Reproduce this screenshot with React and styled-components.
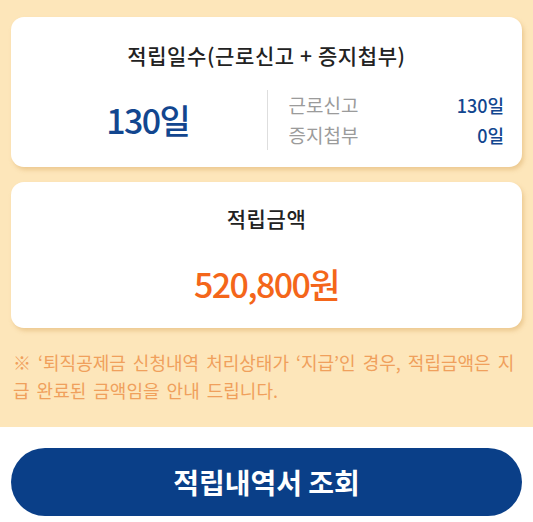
import React from "react";
import styled, { createGlobalStyle } from "styled-components";

const GlobalStyle = createGlobalStyle`
  html, body {
    margin: 0;
    padding: 0;
    background: #ffffff;
  }
  body {
    font-family: "Noto Sans CJK KR", "Noto Sans", sans-serif;
    -webkit-font-smoothing: antialiased;
  }
`;

const Page = styled.div`
  width: 533px;
  display: flex;
  flex-direction: column;
`;

const Summary = styled.section`
  background: #fde6ba;
  padding: 17px 11px 23px;
  display: flex;
  flex-direction: column;
  gap: 15px;
`;

const Card = styled.div`
  background: #ffffff;
  border-radius: 13px;
  box-shadow: 2px 3px 4px rgba(206, 150, 70, 0.35);
  padding: ${(p) => p.$pad};
  display: flex;
  flex-direction: column;
  align-items: center;
  gap: ${(p) => p.$gap};
`;

const CardTitle = styled.h2`
  margin: 0;
  font-size: 21px;
  line-height: 28px;
  font-weight: 500;
  letter-spacing: 0.6px;
  color: #222222;
  text-align: center;
`;

const DaysBody = styled.div`
  align-self: stretch;
  display: grid;
  grid-template-columns: 1fr 1fr;
`;

const BigValue = styled.div`
  display: flex;
  align-items: center;
  justify-content: center;
  font-size: 34px;
  line-height: 44px;
  font-weight: 500;
  letter-spacing: -1.6px;
  color: ${(p) => p.$color};
`;

const Breakdown = styled.div`
  border-left: 1px solid #dedede;
  padding-left: 21px;
  display: flex;
  flex-direction: column;
`;

const BreakRow = styled.div`
  display: flex;
  justify-content: space-between;
  align-items: baseline;
  line-height: 30px;
`;

const BreakLabel = styled.span`
  font-size: 19px;
  color: #9b9b9b;
`;

const BreakValue = styled.span`
  font-size: 18px;
  color: #12468f;
  font-weight: 500;
`;

const Note = styled.p`
  margin: 5px 2px 0;
  font-size: 18px;
  line-height: 28px;
  word-spacing: 3px;
  color: #f0a05c;
`;

const Footer = styled.div`
  padding: 21px 11px 6px;
`;

const PrimaryButton = styled.button`
  width: 100%;
  height: 68px;
  border: 0;
  border-radius: 34px;
  background: #0a3f88;
  color: #ffffff;
  font-family: "Noto Sans CJK KR", "Noto Sans", sans-serif;
  font-size: 28px;
  font-weight: 700;
  cursor: pointer;
`;

export default function App() {
  return (
    <>
      <GlobalStyle />
      <Page>
        <Summary>
          <Card $pad="24px 18px 17px" $gap="21px">
            <CardTitle>적립일수(근로신고 + 증지첩부)</CardTitle>
            <DaysBody>
              <BigValue $color="#12468f">130일</BigValue>
              <Breakdown>
                <BreakRow>
                  <BreakLabel>근로신고</BreakLabel>
                  <BreakValue>130일</BreakValue>
                </BreakRow>
                <BreakRow>
                  <BreakLabel>증지첩부</BreakLabel>
                  <BreakValue>0일</BreakValue>
                </BreakRow>
              </Breakdown>
            </DaysBody>
          </Card>
          <Card $pad="22px 18px 22px" $gap="30px">
            <CardTitle>적립금액</CardTitle>
            <BigValue $color="#f4661a">520,800원</BigValue>
          </Card>
          <Note>
            ※ ‘퇴직공제금 신청내역 처리상태가 ‘지급’인 경우, 적립금액은 지급 완료된 금액임을 안내 드립니다.
          </Note>
        </Summary>
        <Footer>
          <PrimaryButton type="button">적립내역서 조회</PrimaryButton>
        </Footer>
      </Page>
    </>
  );
}
